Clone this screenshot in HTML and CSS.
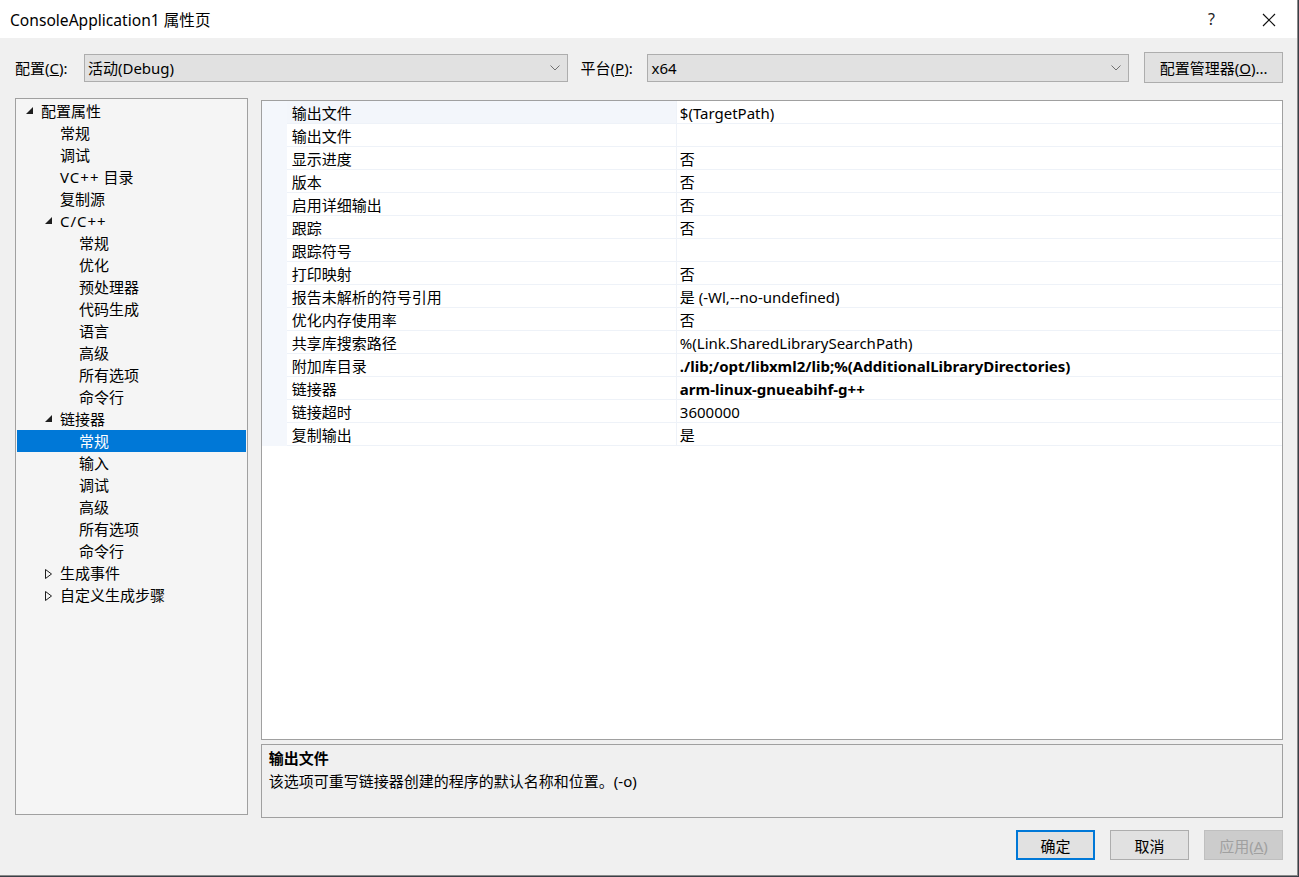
FILE: index.html
```html
<!DOCTYPE html>
<html>

<head>
    <title>ConsoleApplication1 属性页</title>
    <link rel="stylesheet" href="styles.css">
</head>

<body>
    <div class="window">
        <div class="titlebar">
            <span class="title">ConsoleApplication1 属性页</span>
            <span class="help">?</span>
            <span class="close">
                <svg width="14" height="14" viewBox="0 0 14 14">
                    <path d="M1 1 L13 13 M13 1 L1 13" stroke="#111" stroke-width="1.2" fill="none" />
                </svg>
            </span>
        </div>

        <div class="content">
            <div class="config-row">
                <label class="field-label">配置(<u>C</u>):</label>
                <div class="combo combo-config">
                    <span>活动(Debug)</span>
                    <svg class="chevron" width="10" height="6" viewBox="0 0 10 6">
                        <path d="M0.5 0.5 L5 5 L9.5 0.5" stroke="#707070" stroke-width="1" fill="none" />
                    </svg>
                </div>
                <label class="field-label platform-label">平台(<u>P</u>):</label>
                <div class="combo combo-platform">
                    <span>x64</span>
                    <svg class="chevron" width="10" height="6" viewBox="0 0 10 6">
                        <path d="M0.5 0.5 L5 5 L9.5 0.5" stroke="#707070" stroke-width="1" fill="none" />
                    </svg>
                </div>
                <button class="btn btn-manager">配置管理器(<u>O</u>)...</button>
            </div>

            <div class="main">
                <div class="tree">
                    <div class="node lvl0"><svg class="arrow" width="8" height="8" viewBox="0 0 8 8"><path d="M7 0 L7 7 L0 7 Z" fill="#1e1e1e" /></svg>配置属性</div>
                    <div class="node lvl1">常规</div>
                    <div class="node lvl1">调试</div>
                    <div class="node lvl1"><span class="plus">VC++</span> 目录</div>
                    <div class="node lvl1">复制源</div>
                    <div class="node lvl1"><svg class="arrow" width="8" height="8" viewBox="0 0 8 8"><path d="M7 0 L7 7 L0 7 Z" fill="#1e1e1e" /></svg><span class="plus">C/C++</span></div>
                    <div class="node lvl2">常规</div>
                    <div class="node lvl2">优化</div>
                    <div class="node lvl2">预处理器</div>
                    <div class="node lvl2">代码生成</div>
                    <div class="node lvl2">语言</div>
                    <div class="node lvl2">高级</div>
                    <div class="node lvl2">所有选项</div>
                    <div class="node lvl2">命令行</div>
                    <div class="node lvl1"><svg class="arrow" width="8" height="8" viewBox="0 0 8 8"><path d="M7 0 L7 7 L0 7 Z" fill="#1e1e1e" /></svg>链接器</div>
                    <div class="node lvl2 selected">常规</div>
                    <div class="node lvl2">输入</div>
                    <div class="node lvl2">调试</div>
                    <div class="node lvl2">高级</div>
                    <div class="node lvl2">所有选项</div>
                    <div class="node lvl2">命令行</div>
                    <div class="node lvl1"><svg class="arrow" width="8" height="10" viewBox="0 0 8 10"><path d="M0.5 0.5 L6.5 5 L0.5 9.5 Z" fill="none" stroke="#1e1e1e" stroke-width="1" /></svg>生成事件</div>
                    <div class="node lvl1"><svg class="arrow" width="8" height="10" viewBox="0 0 8 10"><path d="M0.5 0.5 L6.5 5 L0.5 9.5 Z" fill="none" stroke="#1e1e1e" stroke-width="1" /></svg>自定义生成步骤</div>
                </div>

                <div class="right">
                    <div class="grid">
                        <div class="prop selected"><span class="margin"></span><span class="name">输出文件</span><span class="value">$(TargetPath)</span></div>
                        <div class="prop"><span class="margin"></span><span class="name">输出文件</span><span class="value"></span></div>
                        <div class="prop"><span class="margin"></span><span class="name">显示进度</span><span class="value">否</span></div>
                        <div class="prop"><span class="margin"></span><span class="name">版本</span><span class="value">否</span></div>
                        <div class="prop"><span class="margin"></span><span class="name">启用详细输出</span><span class="value">否</span></div>
                        <div class="prop"><span class="margin"></span><span class="name">跟踪</span><span class="value">否</span></div>
                        <div class="prop"><span class="margin"></span><span class="name">跟踪符号</span><span class="value"></span></div>
                        <div class="prop"><span class="margin"></span><span class="name">打印映射</span><span class="value">否</span></div>
                        <div class="prop"><span class="margin"></span><span class="name">报告未解析的符号引用</span><span class="value">是 (-Wl,--no-undefined)</span></div>
                        <div class="prop"><span class="margin"></span><span class="name">优化内存使用率</span><span class="value">否</span></div>
                        <div class="prop"><span class="margin"></span><span class="name">共享库搜索路径</span><span class="value">%(Link.SharedLibrarySearchPath)</span></div>
                        <div class="prop"><span class="margin"></span><span class="name">附加库目录</span><span class="value bold">./lib;/opt/libxml2/lib;%(AdditionalLibraryDirectories)</span></div>
                        <div class="prop"><span class="margin"></span><span class="name">链接器</span><span class="value bold">arm-linux-gnueabihf-g++</span></div>
                        <div class="prop"><span class="margin"></span><span class="name">链接超时</span><span class="value">3600000</span></div>
                        <div class="prop"><span class="margin"></span><span class="name">复制输出</span><span class="value">是</span></div>
                    </div>
                    <div class="desc">
                        <div class="desc-title">输出文件</div>
                        <div class="desc-text">该选项可重写链接器创建的程序的默认名称和位置。(-o)</div>
                    </div>
                </div>
            </div>

            <div class="footer">
                <button class="btn btn-default">确定</button>
                <button class="btn">取消</button>
                <button class="btn btn-disabled">应用(<u>A</u>)</button>
            </div>
        </div>
    </div>
</body>

</html>
```

FILE: styles.css
```css
body {
    margin: 0;
    background: #3a3f47;
    font-family: "Noto Sans", "Noto Sans CJK SC", sans-serif;
    font-size: 15px;
    color: #000;
}

.window {
    width: 1297px;
    height: 875px;
    background: #f0f0f0;
    border-right: 1px solid #8a8a8a;
    border-bottom: 1px solid #8a8a8a;
}

.titlebar {
    height: 38px;
    background: #fff;
    display: flex;
    align-items: center;
    padding-left: 10px;
}

.title {
    flex-grow: 1;
    font-size: 15.6px;
}

.help {
    width: 54px;
    font-size: 16px;
    color: #222;
}

.close {
    width: 35px;
    padding-top: 4px;
}

.content {
    padding: 0 14px 0 15px;
}

.config-row {
    display: flex;
    align-items: center;
    height: 31px;
    margin-top: 14px;
}

.field-label {
    width: 69px;
}

.platform-label {
    margin-left: 13px;
    width: 67px;
}

.combo {
    border: 1px solid #adadad;
    background: #e1e1e1;
    display: flex;
    align-items: center;
    padding: 0 7px 0 3px;
    box-sizing: border-box;
    height: 28px;
}

.combo span {
    flex-grow: 1;
}

.combo-config {
    width: 484px;
}

.combo-platform {
    width: 482px;
}

.btn {
    font-family: inherit;
    font-size: 15px;
    width: 79px;
    height: 30px;
    border: 1px solid #adadad;
    background: #e1e1e1;
    color: #000;
    padding: 0;
}

.btn-manager {
    margin-left: 15px;
    width: 139px;
    height: 31px;
}

.main {
    display: flex;
    margin-top: 15px;
    gap: 13px;
}

.tree {
    width: 233px;
    height: 717px;
    box-sizing: border-box;
    border: 1px solid #a0a0a0;
    background: #f5f5f5;
    padding: 1px;
}

.node {
    height: 22px;
    line-height: 22px;
    position: relative;
    white-space: nowrap;
}

.plus {
    letter-spacing: 1px;
}

.lvl0 {
    padding-left: 24px;
}

.lvl1 {
    padding-left: 43px;
}

.lvl2 {
    padding-left: 62px;
}

.node .arrow {
    position: absolute;
    top: 7px;
}

.lvl0 .arrow {
    left: 9px;
}

.lvl1 .arrow {
    left: 28px;
}

.node.selected {
    background: #0078d7;
    color: #fff;
}

.right {
    width: 1023px;
    padding-top: 2px;
}

.grid {
    height: 640px;
    box-sizing: border-box;
    border: 1px solid #a0a0a0;
    background: #fff;
}

.prop {
    display: flex;
    height: 23px;
    line-height: 24px;
}

.prop .margin {
    width: 25px;
    background: #f4f7fc;
}

.prop .name {
    width: 384px;
    padding-left: 5px;
    border-bottom: 1px solid #eef2f8;
    border-right: 1px solid #eef2f8;
}

.prop .value {
    flex-grow: 1;
    padding-left: 3px;
    border-bottom: 1px solid #eef2f8;
    white-space: nowrap;
}

.prop.selected .name {
    background: #f3f6fb;
}

.value.bold {
    font-weight: bold;
}

.desc {
    margin-top: 4px;
    height: 74px;
    box-sizing: border-box;
    border: 1px solid #a0a0a0;
    padding: 2px 7px;
    line-height: 23px;
}

.desc-title {
    font-weight: bold;
}

.footer {
    display: flex;
    justify-content: flex-end;
    gap: 15px;
    margin-top: 12px;
}

.btn-default {
    border: 2px solid #0078d7;
}

.btn-disabled {
    background: #cccccc;
    border-color: #bfbfbf;
    color: #a0a0a0;
}
```
